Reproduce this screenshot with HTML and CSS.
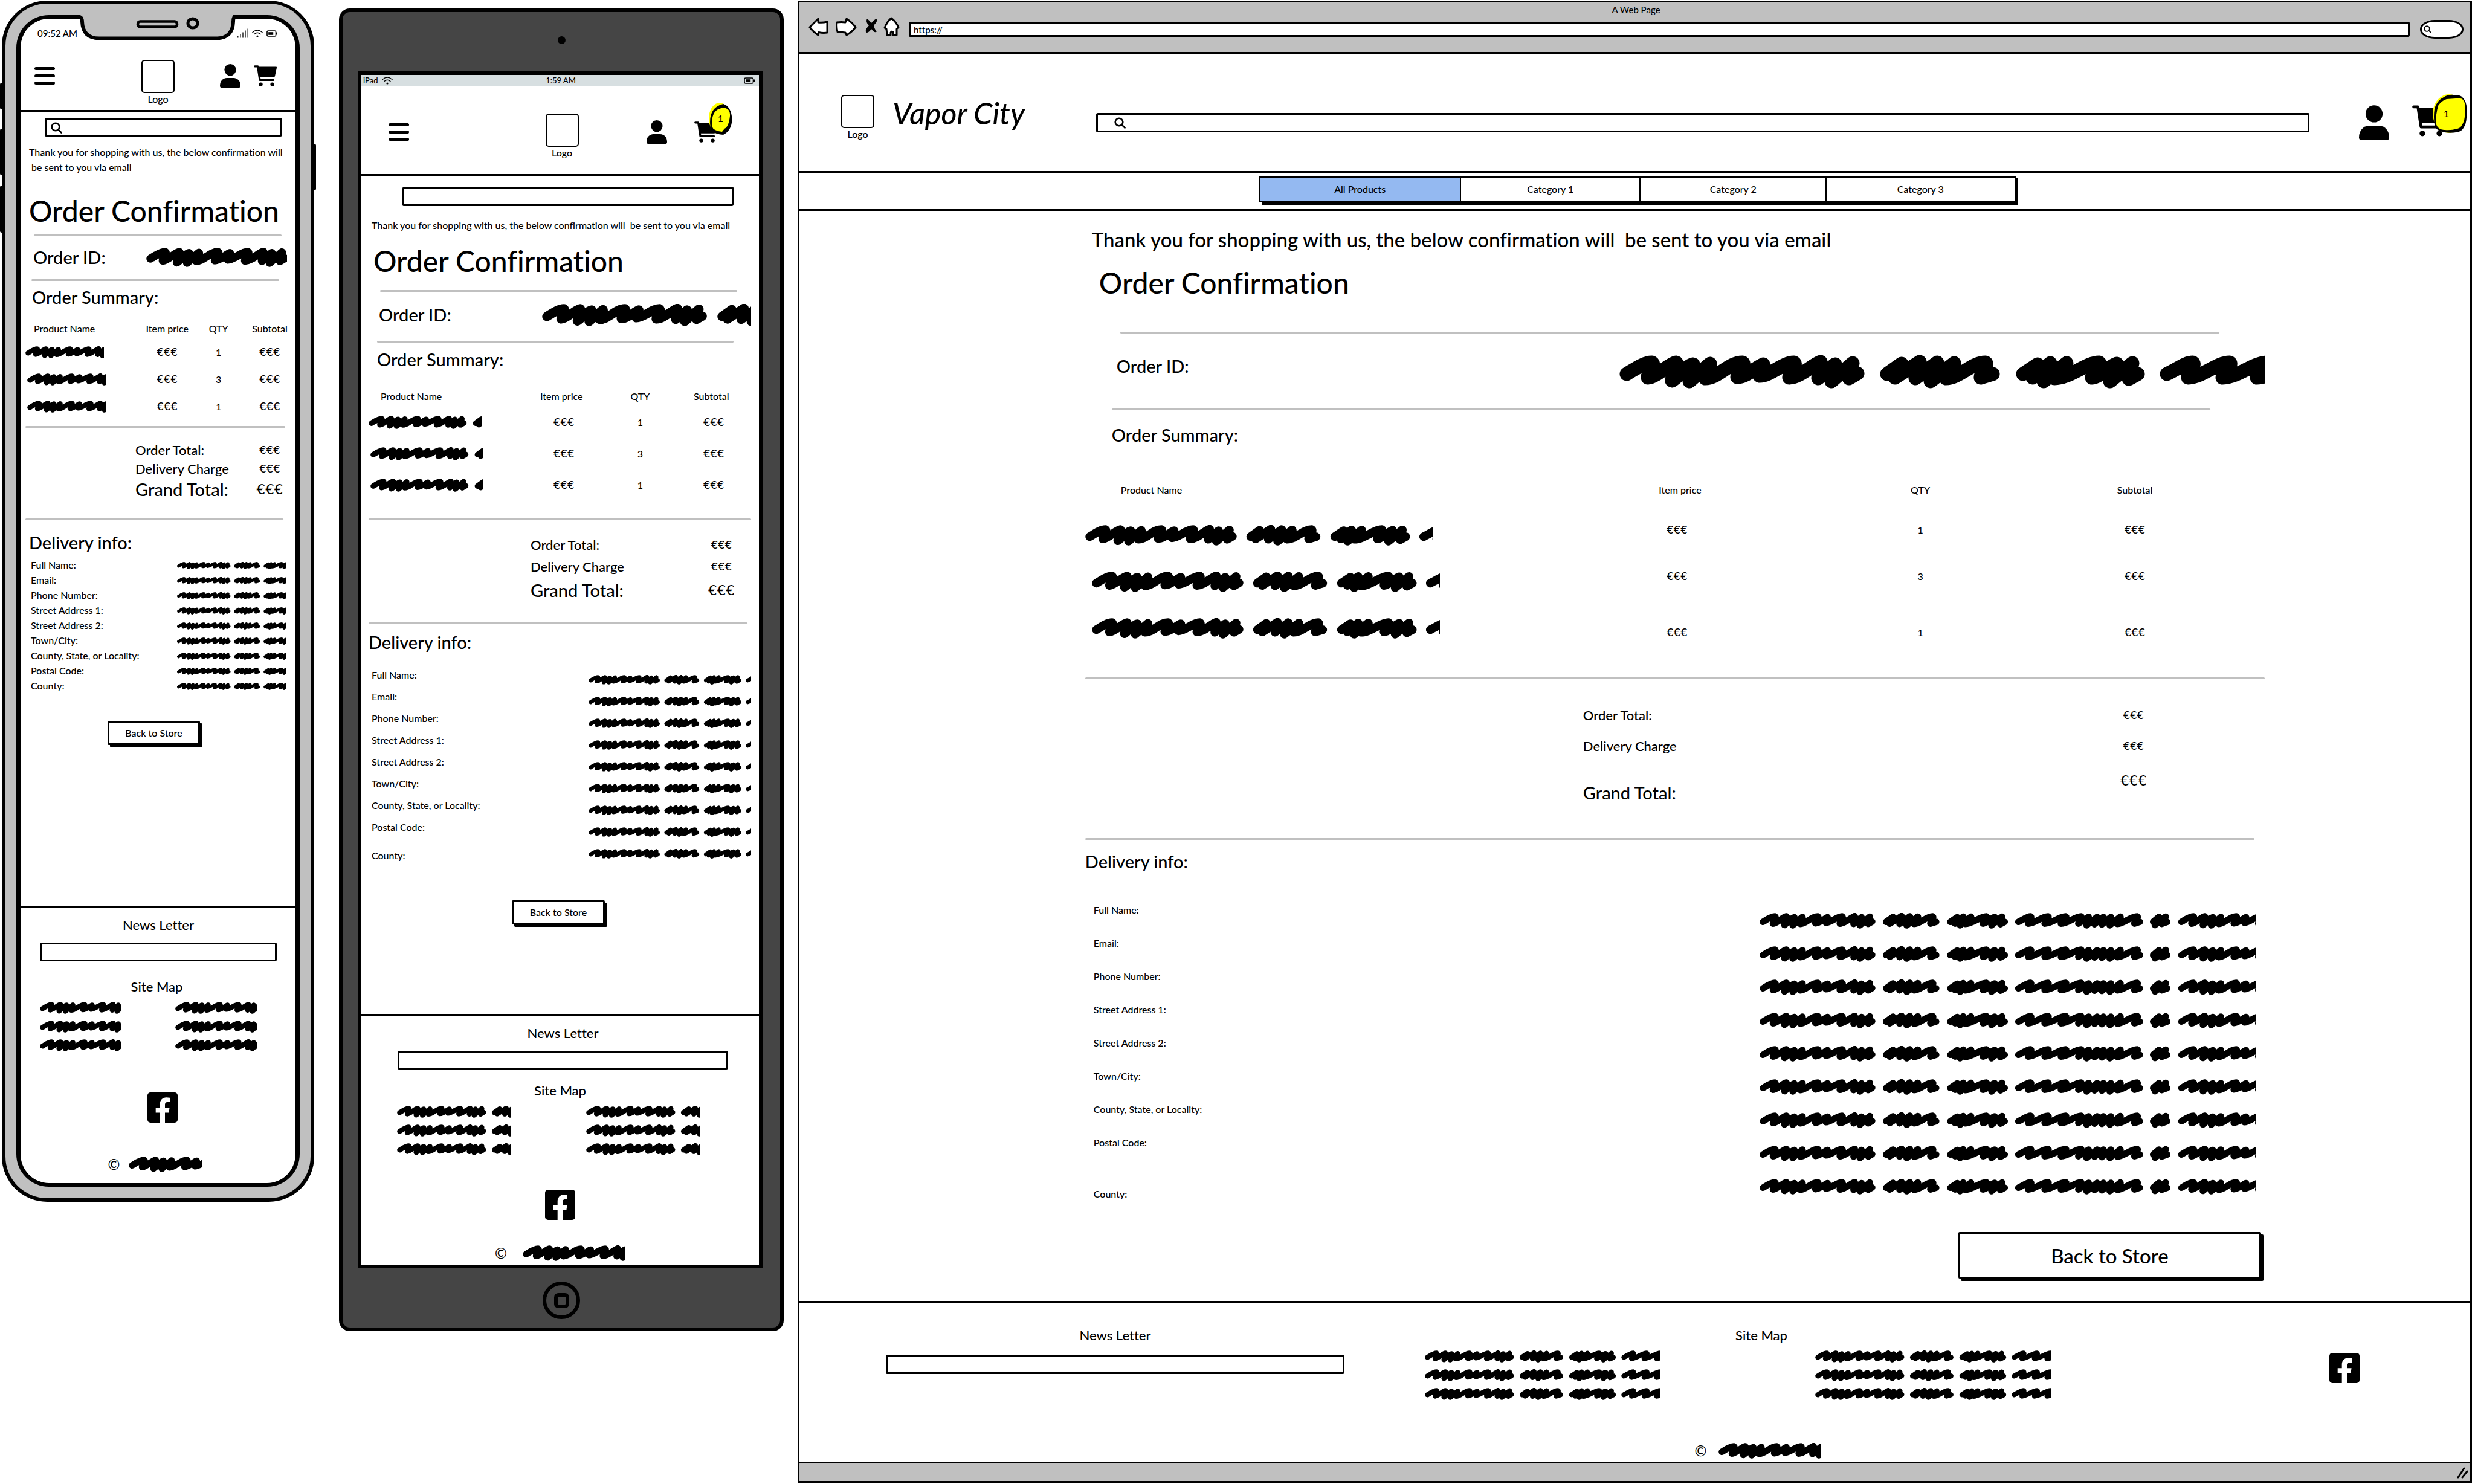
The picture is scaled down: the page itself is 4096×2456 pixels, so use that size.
FILE: index.html
```html
<!DOCTYPE html>
<html lang="en">
<head>
<meta charset="utf-8">
<meta name="viewport" content="width=device-width, initial-scale=1">
<title>Vapor City – Order Confirmation wireframes</title>
<link rel="stylesheet" href="styles.css">
</head>
<body>
<svg class="defs" aria-hidden="true">
  <symbol id="ink" viewBox="0 0 1860 55" preserveAspectRatio="xMinYMin slice">
    <g fill="none" stroke="#000" stroke-width="23" stroke-linecap="round" stroke-linejoin="round">
      <path id="ink-a" d="M12 31C24 24 40 12 54 12C60 16 46 30 47 37C62 36 80 15 94 12C99 16 86 34 87 42C98 36 112 16 122 15L116 43L150 14C153 20 142 30 142 38C164 38 180 12 204 12C210 16 195 30 195 36C210 36 226 20 238 15L232 34C250 34 270 12 289 12C295 16 280 30 281 37C300 36 316 18 333 11L329 38L357 15L351 43L386 13L380 38L394 30"/>
      <path transform="translate(-3)" d="M446 31L470 14L459 37L500 11L493 38L529 12L518 43L557 13C560 20 544 30 543 38C566 38 586 12 609 12C615 16 600 30 601 37L621 31"/>
      <path transform="translate(-4)" d="M672 31L696 15L688 37L717 13L706 43L744 13L724 38C750 38 776 12 798 12C804 16 786 30 786 37C800 36 814 18 827 14L816 43L853 13L847 39L862 31"/>
      <path transform="translate(-8)" d="M914 31C930 24 944 12 957 12C963 16 948 30 949 37C974 36 996 12 1018 12C1024 16 1006 30 1006 37C1034 36 1056 12 1080 12C1086 16 1063 30 1063 37C1090 36 1112 12 1134 12L1124 37L1160 14L1153 43L1190 14L1180 39L1212 14L1206 40L1238 14L1234 43L1271 13C1274 18 1260 30 1260 38C1284 38 1306 12 1330 12C1336 16 1319 30 1320 37L1339 31"/>
      <path transform="translate(-12)" d="M1390 31L1410 14L1396 42L1434 13L1420 38L1439 31"/>
      <use href="#ink-a" x="1465"/>
    </g>
  </symbol>
  <symbol id="user" viewBox="0 0 34 39">
    <circle cx="17" cy="9.6" r="9.6"/>
    <path d="M0 36C0 28 5 23 11.500 23H22.500C29 23 34 28 34 36Q34 39 31.500 39H2.500Q0 39 0 36Z"/>
  </symbol>
  <symbol id="cart" viewBox="0 0 38 35">
    <path d="M1.700 1.800H6.500L10 24.300H32.500" fill="none" stroke="#000" stroke-width="3.200" stroke-linecap="round" stroke-linejoin="round"/>
    <path d="M6 2.600H37Q38.200 2.800 38 4L35 18Q34.500 19.700 33 19.700H9Z"/>
    <circle cx="11.500" cy="31.600" r="3.200"/><circle cx="30.600" cy="31.600" r="3.200"/>
  </symbol>
  <symbol id="lens" viewBox="0 0 19 19">
    <g fill="none" stroke="#000" stroke-width="2.600" stroke-linecap="round"><circle cx="8" cy="8" r="6.300"/><path d="M12.500 12.500L17.500 17.500"/></g>
  </symbol>
  <symbol id="facebook" viewBox="0 0 50 50">
    <rect width="50" height="50" rx="5"/>
    <path fill="#fff" d="M20.700 50V33.500H13.700V25.200H20.700V19.500C20.700 12.500 25 8.200 31.500 8.200Q34 8.200 37 8.700V16H33.500C30 16 29 18 29 20.300V25.200H36.600L35.400 33.500H29V50Z"/>
  </symbol>
  <symbol id="wifi" viewBox="0 0 18 13">
    <g fill="none" stroke="#000" stroke-width="1.400" stroke-linecap="round"><path d="M1 4.500Q9 -2.500 17 4.500"/><path d="M4 7.500Q9 3 14 7.500"/></g><circle cx="9" cy="11" r="1.600"/>
  </symbol>
  <symbol id="battery" viewBox="0 0 18 11">
    <rect x="1" y="1" width="14.500" height="9" rx="2" fill="none" stroke="#000" stroke-width="1.600"/><rect x="3.200" y="3.200" width="8" height="4.600"/><rect x="16" y="3.500" width="2" height="4"/>
  </symbol>
  <symbol id="signal" viewBox="0 0 18 16">
    <path d="M.8 15.500V12.500M4.900 15.500V9.500M9 15.500V6.500M13 15.500V3.500M17.200 15.500V.5" stroke="#000" stroke-width="1.300"/>
  </symbol>
</svg>

<div class="board">

  <section class="device phone" aria-label="Phone">
    <span class="side side-a"></span><span class="side side-b"></span><span class="side side-c"></span><span class="side side-d"></span>
    <svg class="notch" viewBox="0 0 268 52" aria-hidden="true">
      <path fill="#c0c0c0" d="M6 3V9Q10 10 10 18Q12 45 38 45H234Q259 44 260 18V3Z"/>
      <path fill="none" stroke="#000" stroke-width="6" d="M0 9Q10 8 10 18Q11 45 38 45.500H234Q259 44 260 18Q260 9 264 9"/>
      <rect x="102" y="17.500" width="65" height="9" rx="4" fill="none" stroke="#000" stroke-width="4.500"/>
      <ellipse cx="193" cy="20.500" rx="8" ry="7.500" fill="none" stroke="#000" stroke-width="5"/>
    </svg>
    <div class="screen">
      <div class="status">
        <span>09:52 AM</span>
        <span class="status-icons">
          <svg class="i-signal"><use href="#signal"/></svg><svg class="i-wifi"><use href="#wifi"/></svg><svg class="i-battery"><use href="#battery"/></svg>
        </span>
      </div>
      <header class="site-header">
        <button class="menu" type="button" aria-label="Menu"><i></i><i></i><i></i></button>
        <a class="logo" href="#"><span class="logo-box"></span>Logo</a>
        <div class="tools">
          <a href="#" aria-label="Account"><svg class="i-user"><use href="#user"/></svg></a>
          <a class="cart" href="#" aria-label="Cart"><svg class="i-cart"><use href="#cart"/></svg></a>
        </div>
      </header>
      <div class="search"><svg class="i-lens"><use href="#lens"/></svg><input class="box" type="search" aria-label="Search"></div>
      <main>
        <p class="thanks">Thank you for shopping with us, the below confirmation will<br>&nbsp;be sent to you via email</p>
        <h1>Order Confirmation</h1>
        <hr class="rule-a">
        <div class="order-id"><h2>Order ID:</h2><svg class="ink"><use href="#ink"/></svg></div>
        <hr class="rule-b">
        <h2 class="summary">Order Summary:</h2>
        <table>
          <thead><tr><th>Product Name</th><th>Item price</th><th>QTY</th><th>Subtotal</th></tr></thead>
          <tbody>
            <tr><td><svg class="ink"><use href="#ink"/></svg></td><td class="euro">€€€</td><td>1</td><td class="euro">€€€</td></tr>
            <tr><td><svg class="ink"><use href="#ink"/></svg></td><td class="euro">€€€</td><td>3</td><td class="euro">€€€</td></tr>
            <tr><td><svg class="ink"><use href="#ink"/></svg></td><td class="euro">€€€</td><td>1</td><td class="euro">€€€</td></tr>
          </tbody>
        </table>
        <hr class="rule-c">
        <dl class="totals">
          <div><dt>Order Total:</dt><dd class="euro">€€€</dd></div>
          <div><dt>Delivery Charge</dt><dd class="euro">€€€</dd></div>
          <div class="grand"><dt>Grand Total:</dt><dd class="euro">€€€</dd></div>
        </dl>
        <hr class="rule-d">
        <h2 class="delivery">Delivery info:</h2>
        <dl class="fields">
          <div><dt>Full Name:</dt><dd><svg class="ink"><use href="#ink"/></svg></dd></div>
          <div><dt>Email:</dt><dd><svg class="ink"><use href="#ink"/></svg></dd></div>
          <div><dt>Phone Number:</dt><dd><svg class="ink"><use href="#ink"/></svg></dd></div>
          <div><dt>Street Address 1:</dt><dd><svg class="ink"><use href="#ink"/></svg></dd></div>
          <div><dt>Street Address 2:</dt><dd><svg class="ink"><use href="#ink"/></svg></dd></div>
          <div><dt>Town/City:</dt><dd><svg class="ink"><use href="#ink"/></svg></dd></div>
          <div><dt>County, State, or Locality:</dt><dd><svg class="ink"><use href="#ink"/></svg></dd></div>
          <div><dt>Postal Code:</dt><dd><svg class="ink"><use href="#ink"/></svg></dd></div>
          <div><dt>County:</dt><dd><svg class="ink"><use href="#ink"/></svg></dd></div>
        </dl>
        <button class="back" type="button">Back to Store</button>
      </main>
      <footer>
        <div class="footer-main">
          <div class="newsletter"><label for="news-phone">News Letter</label><input class="box" id="news-phone" type="email"></div>
          <div class="sitemap">
            <h3>Site Map</h3>
            <ul><li><svg class="ink"><use href="#ink"/></svg></li><li><svg class="ink"><use href="#ink"/></svg></li><li><svg class="ink"><use href="#ink"/></svg></li></ul>
            <ul><li><svg class="ink"><use href="#ink"/></svg></li><li><svg class="ink"><use href="#ink"/></svg></li><li><svg class="ink"><use href="#ink"/></svg></li></ul>
          </div>
          <a class="facebook" href="#" aria-label="Facebook"><svg><use href="#facebook"/></svg></a>
        </div>
        <p class="copyright"><span>©</span><svg class="ink"><use href="#ink"/></svg></p>
      </footer>
    </div>
  </section>

  <section class="device tablet" aria-label="Tablet">
    <span class="camera"></span>
    <div class="screen">
      <div class="status">
        <span class="carrier">iPad <svg class="i-wifi"><use href="#wifi"/></svg></span>
        <span class="clock">1:59 AM</span>
        <svg class="i-battery"><use href="#battery"/></svg>
      </div>
      <header class="site-header">
        <button class="menu" type="button" aria-label="Menu"><i></i><i></i><i></i></button>
        <a class="logo" href="#"><span class="logo-box"></span>Logo</a>
        <div class="tools">
          <a href="#" aria-label="Account"><svg class="i-user"><use href="#user"/></svg></a>
          <a class="cart" href="#" aria-label="Cart"><svg class="i-cart"><use href="#cart"/></svg>
            <span class="badge"><svg viewBox="0 0 39 53"><ellipse cx="18" cy="26" rx="18" ry="26" fill="#ff0"/><path d="M24 2Q37 6 38.500 27Q38 46 24 53Q4 52 2.500 39Q-1 8 24 2Z"/><path fill="#ff0" d="M23 8Q36 9 35 22Q33 40 26 43L22 48Q8 47 5 39Q4 14 18 10Z"/></svg><b>1</b></span></a>
        </div>
      </header>
      <div class="search"><input class="box" type="search" aria-label="Search"></div>
      <main>
        <p class="thanks">Thank you for shopping with us, the below confirmation will &nbsp;be sent to you via email</p>
        <h1>Order Confirmation</h1>
        <hr class="rule-a">
        <div class="order-id"><h2>Order ID:</h2><svg class="ink"><use href="#ink"/></svg></div>
        <hr class="rule-b">
        <h2 class="summary">Order Summary:</h2>
        <table>
          <thead><tr><th>Product Name</th><th>Item price</th><th>QTY</th><th>Subtotal</th></tr></thead>
          <tbody>
            <tr><td><svg class="ink"><use href="#ink"/></svg></td><td class="euro">€€€</td><td>1</td><td class="euro">€€€</td></tr>
            <tr><td><svg class="ink"><use href="#ink"/></svg></td><td class="euro">€€€</td><td>3</td><td class="euro">€€€</td></tr>
            <tr><td><svg class="ink"><use href="#ink"/></svg></td><td class="euro">€€€</td><td>1</td><td class="euro">€€€</td></tr>
          </tbody>
        </table>
        <hr class="rule-c">
        <dl class="totals">
          <div><dt>Order Total:</dt><dd class="euro">€€€</dd></div>
          <div><dt>Delivery Charge</dt><dd class="euro">€€€</dd></div>
          <div class="grand"><dt>Grand Total:</dt><dd class="euro">€€€</dd></div>
        </dl>
        <hr class="rule-d">
        <h2 class="delivery">Delivery info:</h2>
        <dl class="fields">
          <div><dt>Full Name:</dt><dd><svg class="ink"><use href="#ink"/></svg></dd></div>
          <div><dt>Email:</dt><dd><svg class="ink"><use href="#ink"/></svg></dd></div>
          <div><dt>Phone Number:</dt><dd><svg class="ink"><use href="#ink"/></svg></dd></div>
          <div><dt>Street Address 1:</dt><dd><svg class="ink"><use href="#ink"/></svg></dd></div>
          <div><dt>Street Address 2:</dt><dd><svg class="ink"><use href="#ink"/></svg></dd></div>
          <div><dt>Town/City:</dt><dd><svg class="ink"><use href="#ink"/></svg></dd></div>
          <div><dt>County, State, or Locality:</dt><dd><svg class="ink"><use href="#ink"/></svg></dd></div>
          <div><dt>Postal Code:</dt><dd><svg class="ink"><use href="#ink"/></svg></dd></div>
          <div><dt>County:</dt><dd><svg class="ink"><use href="#ink"/></svg></dd></div>
        </dl>
        <button class="back" type="button">Back to Store</button>
      </main>
      <footer>
        <div class="footer-main">
          <div class="newsletter"><label for="news-tablet">News Letter</label><input class="box" id="news-tablet" type="email"></div>
          <div class="sitemap">
            <h3>Site Map</h3>
            <ul><li><svg class="ink"><use href="#ink"/></svg></li><li><svg class="ink"><use href="#ink"/></svg></li><li><svg class="ink"><use href="#ink"/></svg></li></ul>
            <ul><li><svg class="ink"><use href="#ink"/></svg></li><li><svg class="ink"><use href="#ink"/></svg></li><li><svg class="ink"><use href="#ink"/></svg></li></ul>
          </div>
          <a class="facebook" href="#" aria-label="Facebook"><svg><use href="#facebook"/></svg></a>
        </div>
        <p class="copyright"><span>©</span><svg class="ink"><use href="#ink"/></svg></p>
      </footer>
    </div>
    <button class="home" type="button" aria-label="Home"><span></span></button>
  </section>

  <section class="device desktop" aria-label="Desktop">
    <div class="chrome">
      <p>A Web Page</p>
      <div class="toolbar">
        <button type="button" aria-label="Back"><svg class="i-back" viewBox="0 0 34 31"><path d="M2 16L16 2V8Q23 9 31 7V25Q24 26 17 24.500L16 29Q8 24 2 16Z"/></svg></button>
        <button type="button" aria-label="Forward"><svg class="i-next" viewBox="0 0 35 31"><path d="M2 8Q9 7 16 8L18 2Q27 8 33 16Q27 24 18 29L16 25Q9 24 3 24Q1 16 2 8Z"/></svg></button>
        <button class="stop" type="button" aria-label="Stop"><svg class="i-stop" viewBox="0 0 20 23"><path d="M3 0Q6 2 10 7Q14 2 18 0Q22 3 14 11Q15 17 19 21Q16 25 10 17Q6 23 2 23Q-2 20 6 11Q0 5 3 0Z" class="solid"/></svg></button>
        <button type="button" aria-label="Home page"><svg class="i-house" viewBox="0 0 27 32"><path d="M13 2Q20 7 25 17L22 20L22 30H16V25Q13 23 12 26V30H6L5 20L2 18Q6 8 13 2Z"/></svg></button>
        <input class="box url" type="text" value="https://" aria-label="Address">
        <div class="pill"><svg class="i-lens"><use href="#lens"/></svg><input type="search" aria-label="Web search"></div>
      </div>
    </div>
    <div class="screen">
      <header class="site-header">
        <a class="logo" href="#"><span class="logo-box"></span>Logo</a>
        <p class="brand">Vapor City</p>
        <div class="search"><svg class="i-lens"><use href="#lens"/></svg><input class="box" type="search" aria-label="Search"></div>
        <div class="tools">
          <a href="#" aria-label="Account"><svg class="i-user"><use href="#user"/></svg></a>
          <a class="cart" href="#" aria-label="Cart"><svg class="i-cart"><use href="#cart"/></svg>
            <span class="badge"><svg viewBox="0 0 57 64"><ellipse cx="27" cy="32" rx="27" ry="32" fill="#ff0"/><path d="M35 1Q47 1 50 6Q57 13 56 26Q57 45 53 52Q49 61 43 62Q32 65 20 63Q5 61 3 50Q1 38 3 24Q7 10 18 5Q26 0 35 1Z"/><path fill="#ff0" d="M38 7Q48 6 50 9Q54 14 54 22Q54 38 51 46Q47 56 41 57Q31 60 20 59Q9 60 5 48Q5 34 9 19Q14 11 23 8Z"/></svg><b>1</b></span></a>
        </div>
      </header>
      <nav>
        <div class="tabs"><a class="on" href="#">All Products</a><a href="#">Category 1</a><a href="#">Category 2</a><a href="#">Category 3</a></div>
      </nav>
      <main>
        <p class="thanks">Thank you for shopping with us, the below confirmation will &nbsp;be sent to you via email</p>
        <h1>Order Confirmation</h1>
        <hr class="rule-a">
        <div class="order-id"><h2>Order ID:</h2><svg class="ink"><use href="#ink"/></svg></div>
        <hr class="rule-b">
        <h2 class="summary">Order Summary:</h2>
        <table>
          <thead><tr><th>Product Name</th><th>Item price</th><th>QTY</th><th>Subtotal</th></tr></thead>
          <tbody>
            <tr><td><svg class="ink"><use href="#ink"/></svg></td><td class="euro">€€€</td><td>1</td><td class="euro">€€€</td></tr>
            <tr><td><svg class="ink"><use href="#ink"/></svg></td><td class="euro">€€€</td><td>3</td><td class="euro">€€€</td></tr>
            <tr><td><svg class="ink"><use href="#ink"/></svg></td><td class="euro">€€€</td><td>1</td><td class="euro">€€€</td></tr>
          </tbody>
        </table>
        <hr class="rule-c">
        <dl class="totals">
          <div><dt>Order Total:</dt><dd class="euro">€€€</dd></div>
          <div><dt>Delivery Charge</dt><dd class="euro">€€€</dd></div>
          <div class="grand"><dt>Grand Total:</dt><dd class="euro">€€€</dd></div>
        </dl>
        <hr class="rule-d">
        <h2 class="delivery">Delivery info:</h2>
        <dl class="fields">
          <div><dt>Full Name:</dt><dd><svg class="ink"><use href="#ink"/></svg></dd></div>
          <div><dt>Email:</dt><dd><svg class="ink"><use href="#ink"/></svg></dd></div>
          <div><dt>Phone Number:</dt><dd><svg class="ink"><use href="#ink"/></svg></dd></div>
          <div><dt>Street Address 1:</dt><dd><svg class="ink"><use href="#ink"/></svg></dd></div>
          <div><dt>Street Address 2:</dt><dd><svg class="ink"><use href="#ink"/></svg></dd></div>
          <div><dt>Town/City:</dt><dd><svg class="ink"><use href="#ink"/></svg></dd></div>
          <div><dt>County, State, or Locality:</dt><dd><svg class="ink"><use href="#ink"/></svg></dd></div>
          <div><dt>Postal Code:</dt><dd><svg class="ink"><use href="#ink"/></svg></dd></div>
          <div><dt>County:</dt><dd><svg class="ink"><use href="#ink"/></svg></dd></div>
        </dl>
        <button class="back" type="button">Back to Store</button>
      </main>
      <footer>
        <div class="footer-main">
          <div class="newsletter"><label for="news-desktop">News Letter</label><input class="box" id="news-desktop" type="email"></div>
          <div class="sitemap">
            <h3>Site Map</h3>
            <ul><li><svg class="ink"><use href="#ink"/></svg></li><li><svg class="ink"><use href="#ink"/></svg></li><li><svg class="ink"><use href="#ink"/></svg></li></ul>
            <ul><li><svg class="ink"><use href="#ink"/></svg></li><li><svg class="ink"><use href="#ink"/></svg></li><li><svg class="ink"><use href="#ink"/></svg></li></ul>
          </div>
          <a class="facebook" href="#" aria-label="Facebook"><svg><use href="#facebook"/></svg></a>
        </div>
        <p class="copyright"><span>©</span><svg class="ink"><use href="#ink"/></svg></p>
      </footer>
    </div>
    <div class="statusbar"><svg viewBox="0 0 20 20"><path d="M3 18L13 3M10 18L18 8" stroke="#000" stroke-width="3" stroke-linecap="round"/></svg></div>
  </section>

</div>
</body>
</html>
```
FILE: styles.css
```css
* { box-sizing: border-box; }

body {
  margin: 0;
  background: #fff;
  color: #000;
  font: 500 16px/24px Lato, "Open Sans", sans-serif;
  font-variant-ligatures: none;
}

h1, h2, h3, p, dl, dd, ul { margin: 0; padding: 0; font-weight: inherit; }
ul { list-style: none; }
a { color: inherit; text-decoration: none; }
button { padding: 0; border: 0; background: none; color: inherit; font: inherit; }
input { font: inherit; color: inherit; }
svg { display: block; }
.defs { position: absolute; width: 0; height: 0; }

/* Three devices side by side */
.board {
  display: grid;
  grid-template-columns: 523fr 38fr 736fr 23fr 2771fr 5fr;
  align-items: start;
}
.phone { grid-column: 1; }
.tablet { grid-column: 3; }
.desktop { grid-column: 5; }

/* Shared parts */
h1 { font-size: 48px; line-height: 60px; }
h2 { font-size: 29px; line-height: 36px; }
h3, label { display: block; font-size: 22px; line-height: 30px; text-align: center; font-weight: inherit; }
hr { height: 3px; margin: 0; border: 0; border-radius: 2px; background: #c0c0c0; }

.box {
  display: block;
  width: 100%;
  height: 32px;
  padding: 0 8px;
  border: 3px solid #000;
  border-radius: 3px 2px;
  background: #fff;
  outline: 0;
}
.ink { width: 100%; height: 20px; }
.euro { font-family: "DejaVu Sans", sans-serif; font-size: 18px; }

.menu { display: flex; flex-direction: column; justify-content: center; gap: 7px; width: 34px; }
.menu i { height: 5px; border-radius: 3px; background: #000; }
.logo { display: block; font-size: 16px; line-height: 20px; text-align: center; }
.logo-box { display: block; width: 55px; height: 55px; border: 2px solid #000; border-radius: 5px; }
.tools { display: flex; align-items: center; }
.cart { position: relative; }
.i-user { width: 34px; height: 39px; }
.i-cart { width: 38px; height: 35px; }
.i-lens { width: 19px; height: 19px; }
.i-wifi { width: 18px; height: 13px; }
.i-battery { width: 18px; height: 11px; }
.i-signal { width: 18px; height: 16px; }

.badge { position: absolute; display: grid; place-items: center; }
.badge > * { grid-area: 1 / 1; }
.badge svg { width: 100%; height: 100%; }
.badge b { font-weight: inherit; }

.search { position: relative; }
.search .i-lens { position: absolute; left: 10px; top: 7px; }

.site-header { border-bottom: 3px solid #000; }
.phone .site-header, .tablet .site-header { display: grid; grid-template-columns: 1fr auto 1fr; align-items: start; }
.phone .tools, .tablet .tools { justify-self: end; }

.order-id { display: flex; justify-content: space-between; }

table { border-collapse: collapse; table-layout: fixed; }
th, td { padding: 0; text-align: center; font-weight: inherit; }
th:first-child, td:first-child { text-align: left; }

.totals { display: flex; flex-direction: column; font-size: 22px; line-height: 30px; }
.totals > div { display: flex; justify-content: space-between; align-items: center; }
.totals dd { text-align: center; }
.totals .grand { font-size: 29px; line-height: 36px; }
.grand .euro { font-size: 23px; }

.fields > div { display: flex; justify-content: space-between; align-items: center; }

.back {
  display: block;
  border: 3px solid #000;
  border-radius: 2px;
  background: #fff;
  box-shadow: 4px 4px 0 #000;
}

footer { border-top: 3px solid #000; }
.sitemap { display: grid; }
.sitemap h3 { grid-column: 1 / -1; }
.sitemap ul { display: grid; gap: 11px; margin-top: 10px; }
.facebook { display: block; width: 50px; height: 50px; }
.facebook svg { width: 100%; height: 100%; }
.copyright { display: flex; align-items: center; justify-content: center; font-size: 24px; line-height: 26px; }
.copyright .ink { height: 26px; }

/* Phone */
.phone {
  position: relative;
  margin: 1px 3px 0;
  padding: 19px 18px;
  border: 6px solid #000;
  border-top-width: 5px;
  border-radius: 75px;
  background: #c0c0c0;
}
.phone .screen {
  border: 7px solid #000;
  border-top-width: 6px;
  border-bottom-width: 6px;
  border-radius: 54px;
  background: #fff;
  padding-bottom: 18px;
}
.notch { position: absolute; top: 12px; left: calc(50% - 136px); width: 268px; height: 52px; }
.side { position: absolute; left: -9px; width: 6px; border-radius: 3px; background: #000; }
.side-a { top: 131px; height: 44px; }
.side-b { top: 207px; height: 77px; }
.side-c { top: 301px; height: 78px; }
.side-d { top: 232px; height: 77px; left: auto; right: -9px; width: 9px; }
.phone .status { display: flex; justify-content: space-between; align-items: center; padding: 12px 30px 0 28px; font-size: 15px; }
.phone .status-icons { display: flex; align-items: center; gap: 6px; }
.phone .site-header { padding: 32px 0 8px; }
.phone .menu { height: 52px; margin-left: 23px; }
.phone .tools { height: 52px; gap: 22px; margin-right: 31px; }
.phone .search { margin: 10px 22px 0 40px; }
.phone .search .box { height: 31px; }
.phone .thanks { margin: 13px 0 0 14px; line-height: 25px; }
.phone h1 { margin: 30px 0 0 14px; }
.phone .rule-a { margin: 9px 23px 0 22px; }
.phone .order-id { align-items: center; margin: 0 14px 0 21px; padding: 17px 0 18px; }
.phone .order-id .ink { width: 233px; height: 32px; }
.phone .rule-b { margin: 0 27px 0 18px; }
.phone .summary { margin: 9px 0 0 19px; }
.phone table { width: calc(100% - 8px); margin: 22px 0 0 8px; }
.phone th { height: 28px; padding-bottom: 4px; }
.phone th:first-child { width: 43%; padding-left: 14px; }
.phone th:not(:first-child) { width: 19%; }
.phone td { height: 45px; }
.phone td .ink { width: 130px; }
.phone tr + tr td .ink { margin-left: 3px; }
.phone .rule-c { margin: 10px 17px 0 8px; }
.phone .totals { gap: 1px; margin: 22px 0 0 190px; }
.phone .totals dd { width: 85px; }
.phone .rule-d { margin: 30px 20px 0 8px; }
.phone .delivery { margin: 19px 0 0 14px; }
.phone .fields { margin: 6px 16px 0 17px; line-height: 25px; }
.phone .fields dd { width: 180px; padding-top: 3px; }
.phone .fields .ink { height: 12px; }
.phone .back { width: 153px; height: 40px; margin: 46px 0 267px 144px; }
.phone .newsletter { padding: 13px 31px 0 32px; }
.phone .newsletter .box { height: 31px; margin-top: 14px; }
.phone .sitemap { grid-template-columns: 135px 135px; column-gap: 89px; margin: 27px 62px 0 32px; }
.phone .sitemap h3 { margin-right: -28px; }
.phone .facebook { margin: 68px 0 0 210px; }
.phone .copyright { gap: 15px; margin-top: 56px; padding-right: 9px; }
.phone .copyright .ink { width: 122px; }

/* Tablet */
.tablet {
  display: flex;
  flex-direction: column;
  margin-top: 14px;
  border: 6px solid #000;
  border-radius: 18px;
  background: #454545;
}
.camera { width: 13px; height: 13px; margin: 40px auto 45px; border-radius: 50%; background: #000; }
.tablet .screen { margin: 0 29px 0 25px; border: 6px solid #000; background: #fff; padding-bottom: 6px; }
.tablet .status {
  display: grid;
  grid-template-columns: 1fr auto 1fr;
  align-items: center;
  padding: 0 7px 0 3px;
  background: #d7dfe1;
  font-size: 13px;
  line-height: 19px;
}
.carrier { display: flex; align-items: center; gap: 6px; }
.clock, .tablet .logo { margin-left: 6px; }
.tablet .status .i-battery { justify-self: end; }
.tablet .site-header { padding: 45px 0 25px; }
.tablet .menu { height: 60px; margin-left: 45px; }
.tablet .tools { height: 60px; gap: 45px; margin-right: 69px; }
.tablet .badge { left: 24px; top: -31px; width: 39px; height: 53px; }
.tablet .search { margin: 18px 42px 0 68px; }
.tablet .thanks { margin: 19px 0 0 17px; line-height: 25px; }
.tablet h1 { margin: 17px 0 0 20px; }
.tablet .rule-a { margin: 18px 36px 0 31px; }
.tablet .order-id { align-items: flex-start; margin: 0 13px 0 29px; padding: 20px 0 24px; }
.tablet .order-id .ink { width: 346px; height: 37px; }
.tablet .rule-b { margin: 0 42px 0 26px; }
.tablet .summary { margin: 10px 0 0 26px; }
.tablet table { width: 620px; margin: 31px 0 0 12px; }
.tablet th { height: 29px; padding-bottom: 5px; }
.tablet th:first-child { width: 41%; padding-left: 20px; }
.tablet th:nth-child(2), .tablet th:nth-child(3) { width: 21%; }
.tablet td { height: 52px; }
.tablet .euro { padding-left: 8px; }
.tablet td .ink { width: 187px; height: 22px; }
.tablet tr + tr td .ink { margin-left: 3px; }
.tablet .rule-c { margin: 29px 13px 0 12px; }
.tablet .totals { gap: 6px; margin: 26px 0 0 280px; }
.tablet .totals dd { width: 124px; padding: 0; }
.tablet .rule-d { margin: 35px 19px 0 12px; }
.tablet .delivery { margin: 12px 0 0 12px; }
.tablet .fields { margin: 26px 13px 0 17px; line-height: 20px; }
.tablet .fields > div { height: 36px; }
.tablet .fields dt { padding-bottom: 16px; }
.tablet .fields > div:last-child dt { padding: 6px 0 0; }
.tablet .fields dd { width: 269px; }
.tablet .fields .ink { height: 16px; }
.tablet .back { width: 154px; height: 40px; margin: 59px 0 148px 249px; }
.tablet .newsletter { padding: 14px 51px 0 60px; }
.tablet .newsletter .box { margin-top: 14px; }
.tablet .sitemap { grid-template-columns: 189px 189px; column-gap: 124px; margin: 19px 96px 0 59px; }
.tablet .sitemap h3 { margin-right: -38px; }
.tablet .facebook { margin: 57px auto 0; }
.tablet .copyright { gap: 26px; margin-top: 42px; }
.tablet .copyright .ink { width: 170px; }
.home {
  display: grid;
  place-items: center;
  width: 62px;
  height: 62px;
  margin: 22px auto 14px;
  border: 6px solid #000;
  border-radius: 50%;
}
.home span { width: 25px; height: 25px; border: 6px solid #000; border-radius: 7px; }

/* Desktop */
.desktop { margin-top: 1px; border: 3px solid #000; }
.chrome { padding: 2px 11px 22px 15px; border-bottom: 3px solid #000; background: #c0c0c0; }
.chrome p { font-size: 15px; line-height: 20px; text-align: center; }
.toolbar { display: flex; align-items: flex-end; height: 38px; }
.toolbar button { margin-bottom: 4px; }
.toolbar .stop { margin-bottom: 10px; }
.toolbar button path { fill: #fff; stroke: #000; stroke-width: 3px; stroke-linejoin: round; }
.toolbar button .solid { fill: #000; stroke: none; }
.i-back { width: 34px; height: 31px; margin-right: 11px; }
.i-next { width: 35px; height: 31px; margin-right: 14px; }
.i-stop { width: 20px; height: 23px; margin-right: 10px; }
.i-house { width: 27px; height: 32px; margin-right: 15px; }
.toolbar .url { flex: 1; width: auto; height: 25px; margin: 0 17px 3px 0; padding: 0 5px; font-size: 15px; }
.pill {
  display: flex;
  align-items: center;
  gap: 2px;
  width: 72px;
  height: 31px;
  padding: 0 6px 0 3px;
  border: 3px solid #000;
  border-radius: 24px / 15px;
  background: #fff;
}
.pill .i-lens { flex: none; width: 13px; height: 13px; }
.pill input { min-width: 0; width: 100%; border: 0; padding: 0; background: none; outline: 0; }
.desktop .screen { background: #fff; }
.desktop .site-header { display: flex; align-items: flex-start; padding: 68px 40px 51px 69px; }
.brand { flex: none; width: 367px; padding-left: 30px; font-size: 50px; line-height: 60px; font-style: italic; }
.desktop .search { flex: 1; margin-top: 30px; }
.desktop .search .i-lens { left: 30px; }
.desktop .tools { height: 75px; margin: 8px 0 -8px 82px; gap: 38px; }
.desktop .i-user { width: 50px; height: 58px; }
.desktop .i-cart { width: 56px; height: 52px; margin-bottom: 6px; }
.desktop .badge { left: 34px; top: -18px; width: 57px; height: 64px; }
.desktop .badge b { padding-right: 12px; }
nav { padding: 5px 0 11px 8px; border-bottom: 3px solid #000; }
.tabs {
  display: grid;
  grid-template-columns: 331fr 298fr 308fr 313fr;
  width: 1252px;
  margin: 0 auto;
  border: 3px solid #000;
  border-width: 3px 2px;
  box-shadow: 4px 4px 0 #000;
}
.tabs a { line-height: 38px; text-align: center; font-size: 16px; }
.tabs a + a { border-left: 2px solid #000; }
.tabs .on { background: #94b9f1; }
.desktop main { margin: 0 12.300% 0 17.100%; }
.desktop .thanks { padding: 27px 0 0 11px; font-size: 33px; line-height: 40px; }
.desktop h1 { margin: 22px 0 0 23px; }
.desktop .rule-a { margin: 51px 75px 0 58px; }
.desktop .order-id { align-items: flex-start; margin-left: 52px; padding: 36px 0 33px; }
.desktop .order-id .ink { width: 1068px; height: 55px; }
.desktop .rule-b { margin: 0 90px 0 44px; }
.desktop .summary { margin: 23px 0 0 44px; }
.desktop table { width: 97%; margin-top: 61px; }
.desktop th { height: 48px; padding-bottom: 24px; }
.desktop th:first-child { width: 41.500%; padding-left: 59px; }
.desktop th:nth-child(2), .desktop th:nth-child(3) { width: 21%; }
.desktop td { height: 77px; }
.desktop td:not(:first-child) { padding-bottom: 18px; }
.desktop tbody tr:last-child td:not(:first-child) { padding: 14px 0 0; }
.desktop tbody tr td.euro:nth-child(2) { padding-right: 10px; }
.desktop td .ink { width: 576px; height: 34px; }
.desktop tr + tr td .ink { margin-left: 11px; }
.desktop .rule-c { margin-top: 43px; }
.desktop .totals { gap: 21px; margin: 45px 167px 0 824px; }
.desktop .totals dd { width: 100px; }
.desktop .totals .grand { align-items: flex-start; margin-top: 11px; }
.desktop .grand dt { padding-top: 12px; }
.desktop .grand dd { line-height: 20px; }
.desktop .rule-d { margin: 57px 17px 0 0; }
.desktop .delivery { margin-top: 18px; }
.desktop .fields { margin: 52px 15px 0 14px; line-height: 20px; }
.desktop .fields > div { height: 55px; }
.desktop .fields dt { padding-bottom: 36px; }
.desktop .fields > div:last-child dt { padding: 24px 0 0; }
.desktop .fields dd { width: 821px; }
.desktop .fields .ink { height: 26px; }
.desktop .back { width: 501px; height: 77px; margin: 48px 6px 37px auto; font-size: 33px; }
.desktop .footer-main {
  display: grid;
  grid-template-columns: 143fr 759fr 133fr 1036fr 461fr 51fr 182fr;
  padding-top: 39px;
}
.desktop .newsletter { grid-column: 2; }
.desktop .newsletter .box { margin-top: 17px; }
.desktop .sitemap { grid-column: 4; grid-template-columns: 390px 390px; justify-content: space-between; }
.desktop .sitemap h3 { padding-left: 78px; }
.desktop .facebook { grid-column: 6; margin-top: 44px; }
.desktop .copyright { gap: 20px; margin-top: 71px; padding: 0 0 5px 408px; }
.desktop .copyright .ink { width: 170px; }
.statusbar { display: flex; justify-content: flex-end; align-items: center; height: 32px; padding-right: 3px; border-top: 3px solid #000; background: #c0c0c0; }
.statusbar svg { width: 20px; height: 20px; }
```
